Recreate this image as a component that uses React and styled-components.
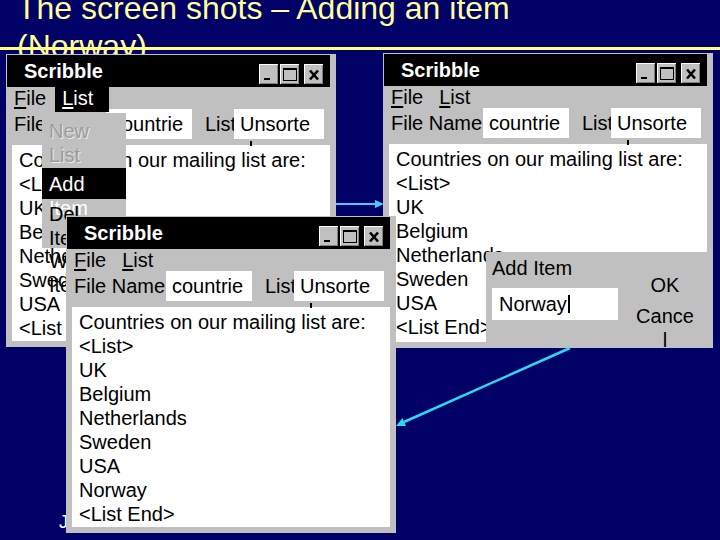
import styled, { createGlobalStyle } from 'styled-components';

const GlobalStyle = createGlobalStyle`
  html, body {
    margin: 0;
    padding: 0;
    background: #000066;
  }
  body {
    font-family: "Liberation Sans", Arial, sans-serif;
  }
`;

const Slide = styled.div`
  position: relative;
  width: 720px;
  height: 540px;
  overflow: hidden;
  background: #000066;
  display: flex;
  flex-direction: column;
  font-family: "Liberation Sans", Arial, sans-serif;
`;

const SlideTitle = styled.h1`
  margin: -11px 0 0 0;
  padding-left: 17px;
  font-size: 32px;
  font-weight: normal;
  line-height: 38px;
  color: #ffff99;
  white-space: nowrap;
`;

const TitleRule = styled.div`
  position: absolute;
  left: 0;
  right: 0;
  top: 47px;
  height: 3px;
  background: #ffff80;
`;

const Footer = styled.div`
  margin-top: auto;
  padding: 0 0 8px 59px;
  font-size: 18px;
  line-height: 20px;
  color: #ffffff;
`;

const Window = styled.div`
  position: absolute;
  left: ${p => p.$x}px;
  top: ${p => p.$y}px;
  z-index: ${p => p.$z};
  width: 330px;
  height: ${p => p.$h}px;
  box-sizing: border-box;
  padding: 1px 6px 6px 1px;
  background: #c0c0c0;
  display: flex;
  flex-direction: column;
  color: #000;
  font-size: 20px;
`;

const TitleBar = styled.div`
  flex: none;
  height: 32px;
  background: #000;
  display: flex;
  align-items: center;
  padding: 0 6px 0 17px;
  color: #fff;
  font-weight: bold;
  font-size: 20px;
`;

const TitleText = styled.span`
  flex: 1;
`;

const Controls = styled.div`
  display: flex;
  align-self: flex-end;
  margin-bottom: 2px;
`;

const CtrlButton = styled.div`
  width: 20px;
  height: 21px;
  margin-left: ${p => p.$gap}px;
  background: #c0c0c0;
  box-shadow: inset -1px -1px #000, inset 1px 1px #fff, inset -2px -2px #808080;
  display: flex;

  svg {
    display: block;
  }
`;

const MenuBar = styled.div`
  flex: none;
  height: 22px;
  display: flex;
  align-items: flex-start;
`;

const MenuTitle = styled.div`
  position: relative;
  z-index: 1;
  height: ${p => (p.$active ? 25 : 22)}px;
  padding: 0 ${p => (p.$active ? 16 : 9)}px 0 7px;
  line-height: 22px;
  background: ${p => (p.$active ? '#000' : 'transparent')};
  color: ${p => (p.$active ? '#fff' : '#000')};

  u {
    text-decoration-thickness: 2px;
    text-underline-offset: 2px;
  }
`;

const FormRow = styled.div`
  flex: none;
  height: 30px;
  display: flex;
  align-items: center;
  padding-left: 7px;
`;

const FieldLabel = styled.span`
  flex: none;
  width: ${p => p.$w}px;
  margin-left: ${p => p.$ml || 0}px;
  overflow: hidden;
  white-space: nowrap;
`;

const TextField = styled.div`
  position: relative;
  flex: none;
  width: ${p => p.$w}px;
  height: 30px;
  box-sizing: border-box;
  padding-left: 6px;
  background: #fff;
  line-height: 30px;
  white-space: nowrap;

  ${p => p.$tick && `
    &::after {
      content: '';
      position: absolute;
      left: 16px;
      top: 32px;
      width: 2px;
      height: 5px;
      background: #000;
    }
  `}
`;

const DocArea = styled.div`
  flex: 1;
  margin: 6px 0 0 5px;
  padding: 3px 7px;
  background: #fff;
  line-height: 24px;
  overflow: hidden;
  white-space: nowrap;
`;

const DropMenu = styled.div`
  position: absolute;
  left: 36px;
  top: 59px;
  z-index: 2;
  width: 84px;
  height: 135px;
  background: #c0c0c0;
  line-height: 24px;
`;

const DropItem = styled.div`
  height: ${p => (p.$h ? `${p.$h}px` : 'auto')};
  box-sizing: border-box;
  padding: ${p => p.$pt}px 0 0 7px;
  white-space: nowrap;
  background: ${p => (p.$active ? '#000' : 'transparent')};
  color: ${p => (p.$disabled ? '#9c9c9c' : p.$active ? '#fff' : '#000')};
  text-shadow: ${p => (p.$disabled ? '1px 1px 0 #ececec' : 'none')};
`;

const Dialog = styled.div`
  position: absolute;
  left: 103px;
  top: 199px;
  right: 0;
  bottom: 0;
  z-index: 2;
  background: #c0c0c0;
  display: flex;
  line-height: 24px;
`;

const DialogMain = styled.div`
  width: 132px;
  box-sizing: border-box;
  padding: 4px 0 0 6px;
`;

const DialogInput = styled.div`
  margin-top: 8px;
  width: 126px;
  height: 32px;
  box-sizing: border-box;
  padding-left: 7px;
  background: #fff;
  line-height: 32px;
  display: flex;
  align-items: center;
`;

const Caret = styled.span`
  display: inline-block;
  width: 2px;
  height: 18px;
  margin-left: 1px;
  background: #000;
`;

const DialogActions = styled.div`
  width: 60px;
  margin-left: 17px;
  padding-top: 21px;
  text-align: center;
  word-break: break-all;
  display: flex;
  flex-direction: column;
  gap: 7px;
`;

const DialogButton = styled.div`
  line-height: 24px;
`;

const ArrowLayer = styled.svg`
  position: absolute;
  left: 0;
  top: 0;
  z-index: 10;
  width: 720px;
  height: 540px;
  pointer-events: none;
`;

const MinIcon = () => (
  <svg width="20" height="21" viewBox="0 0 20 21">
    <rect x="5" y="14" width="6" height="2" fill="#000" />
  </svg>
);

const MaxIcon = () => (
  <svg width="20" height="21" viewBox="0 0 20 21">
    <rect x="3.5" y="4.5" width="13" height="12" fill="none" stroke="#000" strokeWidth="1" />
    <rect x="3" y="4" width="14" height="2" fill="#000" />
  </svg>
);

const CloseIcon = () => (
  <svg width="20" height="21" viewBox="0 0 20 21">
    <path d="M6 6.5 L14 15.5 M14 6.5 L6 15.5" stroke="#000" strokeWidth="2.6" />
  </svg>
);

const countries = ['UK', 'Belgium', 'Netherlands', 'Sweden', 'USA'];

function ScribbleWindow({ x, y, h, z, items, listActive, children }) {
  return (
    <Window $x={x} $y={y} $h={h} $z={z}>
      <TitleBar>
        <TitleText>Scribble</TitleText>
        <Controls>
          <CtrlButton $gap={0}><MinIcon /></CtrlButton>
          <CtrlButton $gap={1}><MaxIcon /></CtrlButton>
          <CtrlButton $gap={4}><CloseIcon /></CtrlButton>
        </Controls>
      </TitleBar>
      <MenuBar>
        <MenuTitle><u>F</u>ile</MenuTitle>
        <MenuTitle $active={listActive}><u>L</u>ist</MenuTitle>
      </MenuBar>
      <FormRow>
        <FieldLabel $w={92}>File Name</FieldLabel>
        <TextField $w={86}>countrie</TextField>
        <FieldLabel $w={29} $ml={13}>List Type</FieldLabel>
        <TextField $w={90} $tick>Unsorte</TextField>
      </FormRow>
      <DocArea>
        <div>Countries on our mailing list are:</div>
        <div>&lt;List&gt;</div>
        {items.map(c => <div key={c}>{c}</div>)}
        <div>&lt;List End&gt;</div>
      </DocArea>
      {children}
    </Window>
  );
}

export default function App() {
  return (
    <>
      <GlobalStyle />
      <Slide>
        <SlideTitle>
          The screen shots – Adding an item
          <br />
          (Norway)
        </SlideTitle>
        <TitleRule />

        <ScribbleWindow x={6} y={54} h={293} z={2} items={countries} listActive>
          <DropMenu>
            <DropItem $h={55} $pt={6} $disabled>New<br />List</DropItem>
            <DropItem $h={31} $pt={4} $active>Add<br />Item</DropItem>
            <DropItem $h={50} $pt={3}>Del<br />Item</DropItem>
            <DropItem $pt={0}>Write<br />Item</DropItem>
          </DropMenu>
        </ScribbleWindow>

        <ScribbleWindow x={383} y={53} h={295} z={1} items={countries}>
          <Dialog>
            <DialogMain>
              <div>Add Item</div>
              <DialogInput>Norway<Caret /></DialogInput>
            </DialogMain>
            <DialogActions>
              <DialogButton>OK</DialogButton>
              <DialogButton>Cancel</DialogButton>
            </DialogActions>
          </Dialog>
        </ScribbleWindow>

        <ScribbleWindow x={66} y={216} h={317} z={3} items={[...countries, 'Norway']} />

        <ArrowLayer viewBox="0 0 720 540">
          <line x1="336" y1="204" x2="376" y2="204" stroke="#4cc8ff" strokeWidth="2" />
          <polygon points="384,204 375,200 375,208" fill="#4cc8ff" />
          <line x1="570" y1="348" x2="404" y2="422" stroke="#27dcf2" strokeWidth="2.5" />
          <polygon points="396,426 406,426 402.5,418" fill="#27dcf2" />
        </ArrowLayer>

        <Footer>Java GUI Programming</Footer>
      </Slide>
    </>
  );
}
